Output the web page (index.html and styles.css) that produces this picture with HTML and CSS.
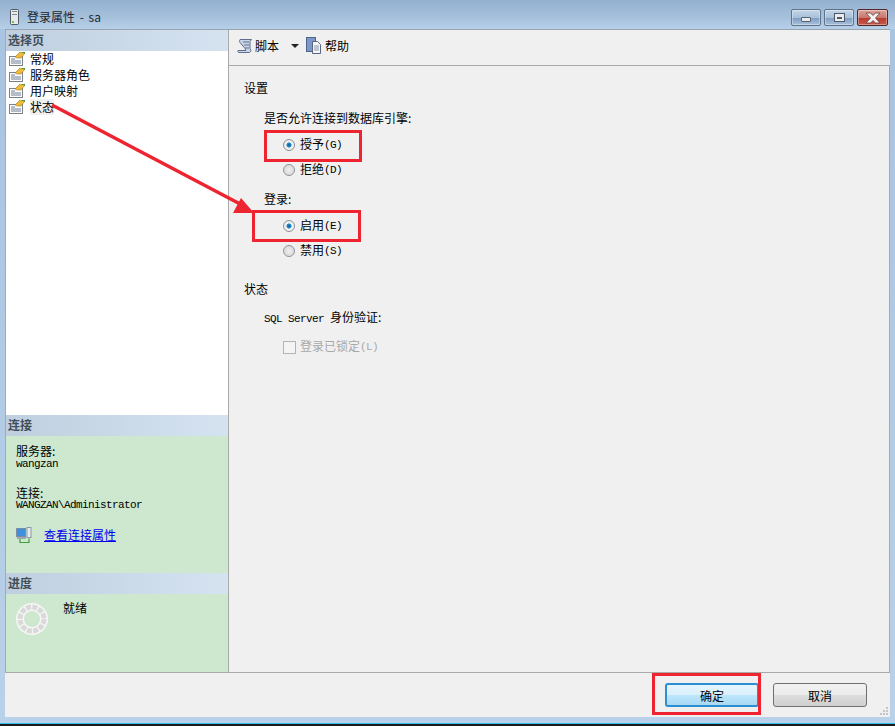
FILE: index.html
```html
<!DOCTYPE html>
<html lang="zh">
<head>
<meta charset="utf-8">
<title>登录属性 - sa</title>
<link rel="stylesheet" href="styles.css">
</head>
<body>
<div class="window">
  <div class="titlebar">
    <svg class="title-icon" width="9" height="16" viewBox="0 0 9 16">
      <rect x="0.500" y="0.500" width="8" height="15" rx="1" fill="#e6eaec" stroke="#4f5a60"/>
      <rect x="2" y="2" width="5" height="1" fill="#7d8a8e"/>
      <rect x="2" y="5" width="5" height="1" fill="#7d8a8e"/>
      <rect x="2" y="12" width="2" height="2" fill="#7fc24a"/>
    </svg>
    <span class="title-text">登录属性 - sa</span>
    <div class="controls">
      <div class="ctl"><span class="min-glyph"></span></div>
      <div class="ctl"><span class="max-glyph"></span></div>
      <div class="ctl ctl-close"><svg width="18" height="12" viewBox="0 0 18 12"><path d="M2 1h4.500l2.500 2.500L11.500 1H16l-4.500 5 4.500 5h-4.500L9 8.500 6.500 11H2l4.500-5z" fill="#f2f2f2" stroke="#6b3d3d" stroke-width="0.800"/></svg></div>
    </div>
  </div>
  <div class="client">
    <div class="main">
      <aside class="side">
        <div class="side-head">选择页</div>
        <ul class="pages">
          <li class="page"><svg class="page-icon" width="16" height="14" viewBox="0 0 16 14"><use href="#pg"/></svg>常规</li>
          <li class="page"><svg class="page-icon" width="16" height="14" viewBox="0 0 16 14"><use href="#pg"/></svg>服务器角色</li>
          <li class="page"><svg class="page-icon" width="16" height="14" viewBox="0 0 16 14"><use href="#pg"/></svg>用户映射</li>
          <li class="page"><svg class="page-icon" width="16" height="14" viewBox="0 0 16 14"><use href="#pg"/></svg><span class="page-active">状态</span></li>
        </ul>
        <div class="side-head">连接</div>
        <div class="conn">
          <div class="conn-label">服务器:</div>
          <div class="mono">wangzan</div>
          <div class="conn-label conn-second">连接:</div>
          <div class="mono mono-tight">WANGZAN\Administrator</div>
          <div class="conn-link">
            <svg width="16" height="16" viewBox="0 0 16 16">
              <rect x="0.500" y="1.500" width="9" height="8" fill="#3f8fe0" stroke="#7c8ea0"/>
              <rect x="1" y="10" width="9" height="2" fill="#9aa8b4"/>
              <rect x="11" y="0.500" width="4" height="10" fill="#e8ecee" stroke="#8a98a4"/>
              <path d="M4 12v3.500h9v-4" fill="none" stroke="#3da03d" stroke-width="1.200"/>
            </svg>
            <a class="link" href="#">查看连接属性</a>
          </div>
        </div>
        <div class="side-head">进度</div>
        <div class="progress">
          <svg class="spinner" width="32" height="32" viewBox="0 0 32 32">
            <circle cx="16" cy="16" r="16" fill="#f6f6f6"/>
            <circle cx="16" cy="16" r="12" fill="none" stroke="#d9d9d9" stroke-width="5" stroke-dasharray="5 1.283"/>
            <circle cx="16" cy="16" r="8" fill="#cde8cf"/>
          </svg>
          <span class="progress-text">就绪</span>
        </div>
      </aside>
      <section class="content">
        <div class="toolbar">
          <svg width="16" height="16" viewBox="0 0 16 16">
            <path d="M3 1.500h11.500l-1.500 2v7l1 2c0 1.200-1 2-2 2H2c-1 0-1.500-1-1-2h8l-1-2-5-6c-.6-1 -.6-2 0-3z" fill="#c9d5e8" stroke="#5d6f8c"/>
            <path d="M6 4h6M7 7h5M8 10h4" stroke="#5d6f8c"/>
          </svg>
          <span class="tool-text">脚本</span>
          <span class="caret"></span>
          <svg class="help-icon" width="16" height="17" viewBox="0 0 16 17">
            <rect x="0.500" y="0.500" width="9" height="14" fill="#7d97c8" stroke="#4d6490"/>
            <path d="M6.500 4.500h5l3 3v9h-8z" fill="#f5f6f8" stroke="#5a6680"/>
            <path d="M8 9h5M8 11h5M8 13h5" stroke="#8b97ad"/>
          </svg>
          <span class="tool-text tool-help">帮助</span>
        </div>
        <div class="form">
          <div class="group-title">设置</div>
          <div class="label label-allow">是否允许连接到数据库引擎:</div>
          <div class="option option-first"><span class="radio radio-on"></span>授予<span class="mono-key">(G)</span></div>
          <div class="option"><span class="radio"></span>拒绝<span class="mono-key">(D)</span></div>
          <div class="label label-login">登录:</div>
          <div class="option option-login"><span class="radio radio-on"></span>启用<span class="mono-key">(E)</span></div>
          <div class="option"><span class="radio"></span>禁用<span class="mono-key">(S)</span></div>
          <div class="group-title group-status">状态</div>
          <div class="label label-sql"><span class="mono-sql">SQL Server </span>身份验证:</div>
          <div class="option option-disabled"><span class="check"></span>登录已锁定<span class="mono-key">(L)</span></div>
        </div>
      </section>
    </div>
    <footer class="footer">
      <button class="btn btn-default" type="button">确定</button>
      <button class="btn" type="button">取消</button>
      <svg class="grip" width="10" height="10" viewBox="0 0 10 10"><path d="M7 1h2v2H7zM4 4h2v2H4zM7 4h2v2H7zM1 7h2v2H1zM4 7h2v2H4zM7 7h2v2H7z" fill="#c4c4c4"/></svg>
    </footer>
  </div>
  <div class="window-edge"></div>
</div>

<svg class="defs" width="0" height="0">
  <defs>
    <g id="pg">
      <rect x="0.500" y="4.500" width="13" height="9" fill="#fdfdfd" stroke="#7a8088"/>
      <path d="M2 7h4M2 9h10M2 11h10" stroke="#6b7d94"/>
      <path d="M6 5l5-5h3l2 1-4 5H8z" fill="#f0b93a" stroke="#a57a1e" stroke-width="0.600"/>
      <path d="M12 0h4v2z" fill="#3e9a3e"/>
    </g>
  </defs>
</svg>

<div class="mark mark-grant"></div>
<div class="mark mark-enable"></div>
<div class="mark mark-ok"></div>
<svg class="arrow" width="895" height="726" viewBox="0 0 895 726">
  <line x1="52" y1="105" x2="242" y2="205" stroke="#ee2530" stroke-width="3.500"/>
  <polygon points="254,213 233,213 241,198" fill="#ee2530"/>
</svg>
</body>
</html>
```
FILE: styles.css
```css
* { box-sizing: border-box; }
html, body { margin: 0; padding: 0; }
body {
  width: 895px;
  height: 726px;
  overflow: hidden;
  position: relative;
  font-family: "Noto Sans CJK SC", "Liberation Sans", sans-serif;
  font-size: 12px;
  color: #000;
  background: #fff;
}
.window {
  width: 895px;
  height: 726px;
  display: flex;
  flex-direction: column;
  background: linear-gradient(180deg, #8fb0cf 0, #a9c4e0 30px, #b9d1ea 100%);
}
.titlebar {
  height: 29px;
  flex: none;
  display: flex;
  align-items: center;
  padding: 4px 7px 0 10px;
  background: linear-gradient(180deg, #93b1cf 0, #a7c1dc 18px, #b7d0ea 29px);
}
.title-icon { flex: none; margin-right: 8px; }
.title-text { font-size: 12px; color: #1b2630; word-spacing: 2px; }
.controls { margin-left: auto; display: flex; gap: 3px; margin-top: 2px; }
.ctl {
  width: 30px;
  height: 17px;
  border: 1px solid #5f7388;
  border-radius: 2px;
  display: flex;
  align-items: center;
  justify-content: center;
  background: linear-gradient(180deg, #c3d5e8 0, #a8c0da 50%, #7e9cbe 52%, #a7c1de 100%);
  box-shadow: inset 0 0 0 1px rgba(255,255,255,.35);
}
.ctl-close {
  width: 31px;
  border-color: #54262a;
  background: linear-gradient(180deg, #dda49c 0, #c8776c 50%, #b93a2c 52%, #c85a4c 100%);
}
.min-glyph { width: 10px; height: 5px; background: #e9edf1; border: 1px solid #56606c; border-radius: 1px; margin-top: 3px; }
.max-glyph { width: 11px; height: 9px; background: #e9edf1; border: 1px solid #4f5966; display: flex; align-items: center; justify-content: center; }
.max-glyph::before { content: ""; width: 5px; height: 2px; background: #4f5966; }
.client {
  height: 688px;
  flex: none;
  margin: 0 5px;
  display: flex;
  flex-direction: column;
  background: #f0f0f0;
  border-top: 1px solid #9aa3ad;
}
.main { height: 643px; flex: none; display: flex; border-bottom: 1px solid #a9a9a9; }
.side {
  width: 224px;
  flex: none;
  display: flex;
  flex-direction: column;
  border-left: 1px solid #a9a9a9;
  border-right: 1px solid #a9a9a9;
}
.side-head {
  height: 21px;
  flex: none;
  padding-left: 2px;
  font-size: 12px;
  font-weight: 700;
  line-height: 19px;
  color: #3f4d58;
  background: linear-gradient(90deg, #bfcfdf 0, #d5e3f1 100%);
}
.pages {
  list-style: none;
  margin: 0;
  padding: 0 0 0 3px;
  height: 364px;
  flex: none;
  background: #fff;
}
.page { height: 16px; display: flex; align-items: center; gap: 5px; line-height: 16px; }
.page-icon { flex: none; }
.page-active { background: #f0f0f0; }
.conn {
  height: 137px;
  flex: none;
  background: #cde8cf;
  padding: 8px 0 0 10px;
}
.conn-label { line-height: 14px; height: 14px; }
.conn-second { margin-top: 16px; }
.mono { font-family: "Liberation Mono", monospace; font-size: 11px; letter-spacing: -0.6px; line-height: 11px; height: 11px; margin-top: 1px; }
.mono-tight { margin-top: 0; }
.conn-link { display: flex; align-items: center; gap: 12px; margin-top: 15px; }
.link { color: #0000ee; text-decoration: underline; }
.progress {
  height: 78px;
  flex: none;
  background: #cde8cf;
  display: flex;
  align-items: flex-start;
  padding: 7px 0 0 10px;
}
.spinner { flex: none; margin-top: 2px; }
.progress-text { margin-left: 15px; line-height: 14px; }
.content { flex: 1; min-width: 0; display: flex; flex-direction: column; }
.toolbar {
  height: 36px;
  flex: none;
  display: flex;
  align-items: center;
  padding-left: 8px;
  border-bottom: 1px solid #a9a9a9;
  padding-bottom: 4px;
}
.tool-text { margin-left: 2px; }
.tool-help { margin-left: 3px; }
.caret {
  width: 0; height: 0;
  margin-left: 12px;
  border-left: 4px solid transparent;
  border-right: 4px solid transparent;
  border-top: 4px solid #222;
}
.help-icon { margin-left: 7px; }
.form { flex: 1; padding: 15px 0 0 15px; border-right: 1px solid #a9a9a9; }
.group-title { line-height: 14px; height: 14px; }
.group-status { margin-top: 24px; }
.label { line-height: 14px; height: 14px; margin-left: 20px; }
.label-allow { margin-top: 16px; }
.label-login { margin-top: 15px; }
.label-sql { margin-top: 14px; }
.mono-sql { font-family: "Liberation Mono", monospace; font-size: 11px; letter-spacing: -0.6px; white-space: pre; }
.option {
  height: 14px;
  padding-bottom: 2px;
  line-height: 14px;
  margin-left: 39px;
  margin-top: 11px;
  display: flex;
  align-items: center;
  white-space: nowrap;
}
.option-first { margin-top: 13px; }
.option-login { margin-top: 13px; }
.option-disabled { color: #a8a8a8; margin-top: 16px; }
.mono-key { font-family: "Liberation Mono", monospace; font-size: 11px; letter-spacing: -0.6px; width: 18px; margin-top: 2px; }
.radio {
  width: 12px;
  height: 12px;
  flex: none;
  margin-right: 5px;
  margin-top: 2px;
  border-radius: 50%;
  border: 1px solid #8c9298;
  background: radial-gradient(circle at 50% 50%, #f0f0f0 0, #dcdcdc 60%, #f6f6f6 100%);
}
.radio-on { background: radial-gradient(circle at 50% 50%, #0e5f96 0, #2390cd 32%, #f1f1f1 40%, #e8e8e8 100%); }
.check {
  width: 13px;
  height: 13px;
  flex: none;
  margin-right: 4px;
  margin-top: 2px;
  border: 1px solid #b4b4b4;
  background: #f4f4f4;
}
.footer {
  flex: 1;
  display: flex;
  align-items: flex-start;
  position: relative;
  padding: 10px 0 0 660px;
  gap: 14px;
}
.btn {
  width: 94px;
  height: 24px;
  font: 12px "Noto Sans CJK SC", sans-serif;
  color: #000;
  padding: 0;
  border: 1px solid #707070;
  border-radius: 3px;
  background: linear-gradient(180deg, #f2f2f2 0, #ebebeb 48%, #dddddd 52%, #cfcfcf 100%);
}
.btn-default {
  border: 2px solid #2c8fd0;
  background: linear-gradient(180deg, #e6f5fd 0, #d9f0fc 48%, #bde6fb 52%, #a7d9f5 100%);
}
.grip { position: absolute; right: 1px; bottom: 1px; }
.window-edge {
  flex: 1;
  background: #b9d1ea;
  border-bottom: 2px solid #1c1c1c;
  box-shadow: inset 0 -1px 0 #2fc0e8;
}
.defs { position: absolute; }
.mark { position: absolute; border: 3px solid #ee2530; }
.mark-grant { left: 264px; top: 130px; width: 98px; height: 32px; }
.mark-enable { left: 252px; top: 210px; width: 109px; height: 32px; }
.mark-ok { left: 652px; top: 673px; width: 109px; height: 42px; }
.arrow { position: absolute; left: 0; top: 0; pointer-events: none; }
```
